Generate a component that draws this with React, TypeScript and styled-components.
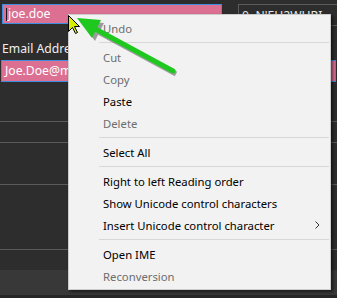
import React from "react";
import styled, { createGlobalStyle } from "styled-components";

const Global = createGlobalStyle`
  html, body { margin: 0; padding: 0; background: #2d2d2d; }
  body { width: 337px; height: 298px; overflow: hidden; font-family: "Noto Sans", "Open Sans", sans-serif; }
`;

const Page = styled.div`
  position: relative;
  width: 337px;
  height: 298px;
  background: #2d2d2d;
  overflow: hidden;
  display: flex;
  flex-direction: column;
`;

const TopRow = styled.div`
  display: flex;
  align-items: flex-start;
  padding-top: 4px;
  height: 22px;
  box-sizing: content-box;
`;

const Field = styled.div<{ $w?: number; $ml?: number }>`
  box-sizing: border-box;
  width: ${(p) => (p.$w ? `${p.$w}px` : "auto")};
  margin-left: ${(p) => p.$ml ?? 0}px;
  height: ${(p) => (p.$w ? 20 : 22)}px;
  background: #db7093;
  border: 1px solid #3d8ee0;
  color: #ffffff;
  font-size: 12.2px;
  line-height: 18px;
  padding-left: 3px;
  display: flex;
  align-items: center;
  white-space: nowrap;
`;

const Caret = styled.span`
  display: inline-block;
  width: 1px;
  height: 13px;
  background: #1a1a1a;
  margin-right: 1px;
`;

const OtherField = styled.div`
  box-sizing: border-box;
  flex: 1;
  margin-left: 16px;
  height: 22px;
  border: 1px solid #5c5c5c;
  border-right: none;
  color: #e8e8e8;
  font-size: 12.2px;
  line-height: 18px;
  padding: 2px 0 0 3px;
  white-space: nowrap;
  overflow: hidden;
`;

const Label = styled.div`
  color: #f0f0f0;
  font-size: 12.2px;
  line-height: 18px;
  padding: 14px 0 0 2px;
  height: 21px;
  white-space: nowrap;
`;

const FieldRow = styled.div`
  display: flex;
  padding-left: 1px;
  padding-right: 1px;
`;

const Band = styled.div<{ $h: number; $bg?: string; $line?: boolean }>`
  box-sizing: border-box;
  height: ${(p) => p.$h}px;
  background: ${(p) => p.$bg ?? "transparent"};
  border-bottom: ${(p) => (p.$line ? "1px solid #5a5a5a" : "none")};
  flex-shrink: 0;
`;

const Menu = styled.div`
  position: absolute;
  left: 68px;
  top: 14px;
  width: 263px;
  box-sizing: border-box;
  background: #f2f2f2;
  border: 1px solid #cccccc;
  box-shadow: 2px 2px 3px rgba(0, 0, 0, 0.55);
  padding: 2px 0 2px 0;
  font-size: 11.3px;
  display: flex;
  flex-direction: column;
`;

const Item = styled.div<{ $disabled?: boolean }>`
  height: 22px;
  display: flex;
  align-items: center;
  padding-left: 34px;
  padding-right: 10px;
  color: ${(p) => (p.$disabled ? "#6d6d6d" : "#000000")};
  white-space: nowrap;
`;

const ItemText = styled.span`
  flex: 1;
`;

const Separator = styled.div`
  height: 7px;
  display: flex;
  align-items: center;
  padding-left: 30px;
  padding-right: 1px;
  &::after {
    content: "";
    flex: 1;
    height: 1px;
    background: #d7d7d7;
  }
`;

const Overlay = styled.svg`
  position: absolute;
  left: 0;
  top: 0;
  pointer-events: none;
`;

const Chevron = () => (
  <svg width="5" height="8" viewBox="0 0 5 8">
    <polyline points="0.5,0.5 4,4 0.5,7.5" fill="none" stroke="#333" strokeWidth="1" />
  </svg>
);

type Entry = { label?: string; disabled?: boolean; sub?: boolean; sep?: boolean };

const entries: Entry[] = [
  { label: "Undo", disabled: true },
  { sep: true },
  { label: "Cut", disabled: true },
  { label: "Copy", disabled: true },
  { label: "Paste" },
  { label: "Delete", disabled: true },
  { sep: true },
  { label: "Select All" },
  { sep: true },
  { label: "Right to left Reading order" },
  { label: "Show Unicode control characters" },
  { label: "Insert Unicode control character", sub: true },
  { sep: true },
  { label: "Open IME" },
  { label: "Reconversion", disabled: true },
];

export default function App() {
  return (
    <>
      <Global />
      <Page>
        <TopRow>
          <Field $w={220} $ml={2}>
            <Caret />
            joe.doe
          </Field>
          <OtherField>0, N'EH2WHRI</OtherField>
        </TopRow>
        <Label>Email Address</Label>
        <FieldRow>
          <Field style={{ flex: 1 }}>Joe.Doe@mail.com</Field>
        </FieldRow>
        <Band $h={40} $line />
        <Band $h={21} $line />
        <Band $h={42} $line />
        <Band $h={65} $line />
        <Band $h={20} />
        <Band $h={25} $bg="#383838" />
        <Band $h={3} $bg="#262626" />

        <Menu>
          {entries.map((e, i) =>
            e.sep ? (
              <Separator key={i} />
            ) : (
              <Item key={i} $disabled={e.disabled}>
                <ItemText>{e.label}</ItemText>
                {e.sub && <Chevron />}
              </Item>
            )
          )}
        </Menu>

        <Overlay width="337" height="298" viewBox="0 0 337 298">
          <g opacity="0.35" transform="translate(3,3)">
            <line x1="173" y1="71" x2="88" y2="25" stroke="#000" strokeWidth="5" />
            <polygon points="77,18 101,20 92,38" fill="#000" />
          </g>
          <line x1="173" y1="71" x2="88" y2="25" stroke="#1ec81e" strokeWidth="5" strokeLinecap="round" />
          <polygon points="77,18 101,20 92,38" fill="#1ec81e" />
          <path
            d="M68.5 15.5 L68.5 31.5 L72.5 27.5 L75.5 33.5 L77.5 32.5 L74.5 26.5 L79.5 26.5 Z"
            fill="#d8f000"
            stroke="#000"
            strokeWidth="1"
            strokeLinejoin="miter"
          />
        </Overlay>
      </Page>
    </>
  );
}
